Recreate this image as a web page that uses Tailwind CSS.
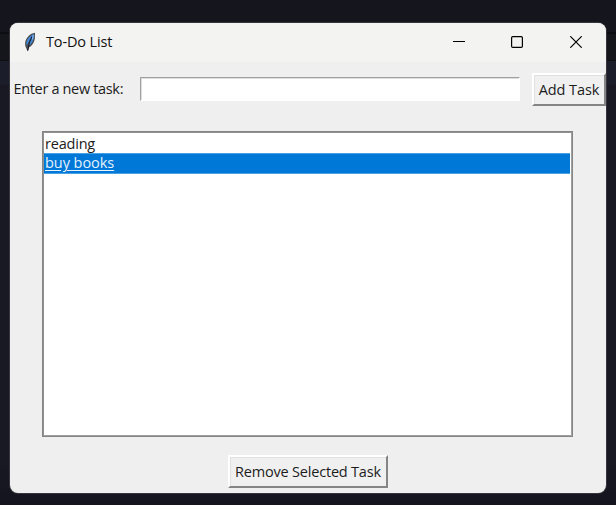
<!DOCTYPE html>
<html lang="en">
<head>
<meta charset="utf-8">
<title>To-Do List</title>
<script src="https://cdn.jsdelivr.net/npm/@tailwindcss/browser@4"></script>
</head>
<body class="h-[505px] w-[616px] overflow-hidden bg-[linear-gradient(to_bottom,#15151d_0_32px,#0c0c12_32px_34px,#15151c_34px_60px,#0e0e15_60px_61px,#1b1d2a_61px_84px,#191923_85px_460px,#14141e_505px)] pt-[23px] pl-[10px] font-['Open_Sans','Noto_Sans',sans-serif] text-[#1c1c1c]">
<main class="flex h-[470px] w-[596px] flex-col overflow-hidden rounded-[8px] bg-[#efefef] shadow-[0_0_0_1px_#36363c]">
  <header class="flex h-[39px] shrink-0 items-center bg-[#f3f3f1] pb-[2px] pl-[13px]">
    <svg class="h-[20px] w-[14px] shrink-0" viewBox="0 0 14 20" fill="none">
      <path d="M12 .8C7.200 1.400 3 5.800 2.200 10.200c-.3 2 0 3.800.6 5.100L4.700 19.500l1.300-4.100C9 14 11.200 10.500 11.900 6.500Z" fill="#4a4c50"/>
      <path d="M10.800 2C7 3.500 4 7.200 3.400 10.500l.2 3.200L8.200 5.600 5.600 14C8 12.500 10 9.500 10.800 6Z" fill="#4288d8"/>
      <path d="M9 4.500C7 8 5.400 12 4.800 18.500" stroke="#18202c" stroke-width="1.100"/>
      <path d="M10.300 3 9.400 7.500" stroke="#8fbdf0" stroke-width="1"/>
    </svg>
    <h1 class="ml-[9px] w-[70px] text-[14.5px] leading-[20px] font-normal tracking-[-0.15px] whitespace-nowrap text-[#111]">To-Do List</h1>
    <div class="ml-auto flex pr-[24px] text-black">
      <svg class="size-[12px]" viewBox="0 0 12 12"><path d="M0 5.500h12" stroke="currentColor"/></svg>
      <svg class="ml-[46px] size-[12px]" viewBox="0 0 12 12" fill="none"><rect x=".6" y=".6" width="10.800" height="10.800" rx="1.200" stroke="currentColor" stroke-width="1.200"/></svg>
      <svg class="ml-[47px] size-[12px]" viewBox="0 0 12 12"><path d="m.3.3 11.400 11.400m0-11.400L.3 11.700" stroke="currentColor" stroke-width="1.200"/></svg>
    </div>
  </header>
  <form class="flex h-[44px] shrink-0 items-start pt-[11px]">
    <label for="task" class="ml-[3px] w-[127px] pt-[6px] pl-[0.5px] text-[14.5px] leading-[20px] tracking-[-0.34px] whitespace-nowrap">Enter a new task:</label>
    <input id="task" class="mt-[4px] h-[24px] w-[380px] border border-t-[#a0a0a0] border-r-white border-b-white border-l-[#a0a0a0] bg-white shadow-[inset_1px_1px_#dedede]">
    <button type="button" class="ml-[12px] h-[33px] w-[74px] border-2 border-t-white border-r-[#858585] border-b-[#858585] border-l-white bg-[#f0f0f0] text-[14.5px] leading-[20px] tracking-[-0.1px] whitespace-nowrap shadow-[inset_1px_1px_#e0e0e0]">Add Task</button>
  </form>
  <ul class="mt-[25px] ml-[32px] h-[306px] w-[531px] shrink-0 border border-[#858585] bg-white pt-[2px] pr-[2px] pl-px text-[14.5px] leading-[20px] shadow-[inset_1px_1px_#909090,inset_-1px_-1px_#a0a0a0]">
    <li class="h-[19px] pl-px tracking-[-0.2px]">reading</li>
    <li class="h-[21px] border-y border-[#48a0e5] bg-[#0078d7] pl-px leading-[18px] tracking-[-0.05px] text-[#e6f2fc] underline underline-offset-2">buy books</li>
  </ul>
  <button type="button" class="mt-[18px] ml-[218px] h-[33px] w-[160px] shrink-0 border-2 border-t-white border-r-[#858585] border-b-[#858585] border-l-white bg-[#f0f0f0] text-[14.5px] leading-[20px] tracking-[-0.2px] whitespace-nowrap shadow-[inset_1px_1px_#e0e0e0]">Remove Selected Task</button>
</main>
</body>
</html>
